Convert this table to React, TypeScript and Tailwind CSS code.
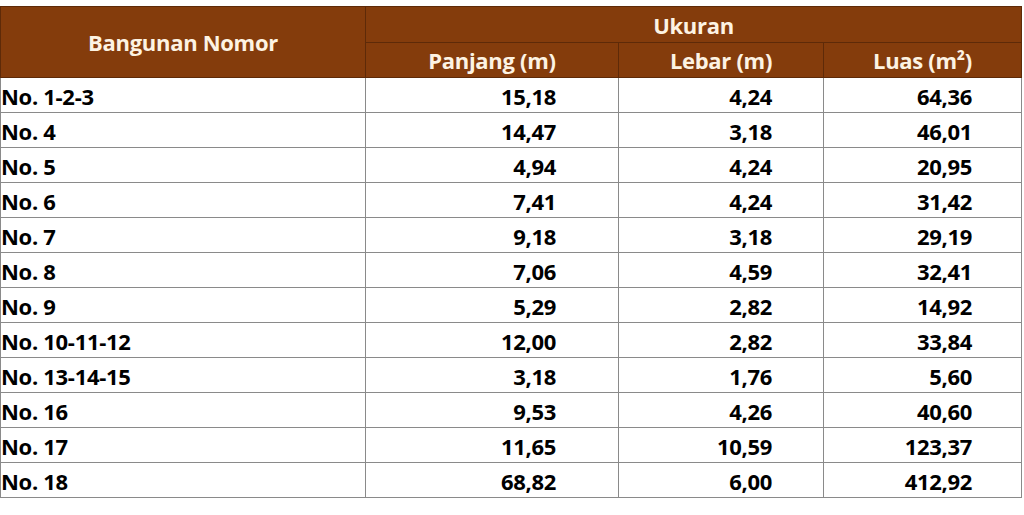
import React from 'react';

const rows = [
  ['No. 1-2-3', '15,18', '4,24', '64,36'],
  ['No. 4', '14,47', '3,18', '46,01'],
  ['No. 5', '4,94', '4,24', '20,95'],
  ['No. 6', '7,41', '4,24', '31,42'],
  ['No. 7', '9,18', '3,18', '29,19'],
  ['No. 8', '7,06', '4,59', '32,41'],
  ['No. 9', '5,29', '2,82', '14,92'],
  ['No. 10-11-12', '12,00', '2,82', '33,84'],
  ['No. 13-14-15', '3,18', '1,76', '5,60'],
  ['No. 16', '9,53', '4,26', '40,60'],
  ['No. 17', '11,65', '10,59', '123,37'],
  ['No. 18', '68,82', '6,00', '412,92'],
];

const App = () => {
  return (
    <div className="w-[1024px] h-[515px] bg-white pt-[6px] font-['Open_Sans',sans-serif]">
      <table className="w-[1021px] border-collapse table-fixed text-[22px] font-bold leading-none tracking-[-0.3px]">
        <colgroup>
          <col className="w-[365px]" />
          <col className="w-[253px]" />
          <col className="w-[205px]" />
          <col className="w-[198px]" />
        </colgroup>
        <thead className="bg-[#843c0c] text-[#fdf3e3]">
          <tr className="h-[36px]">
            <th rowSpan={2} className="border border-[#5e2a08] font-bold text-center">
              Bangunan Nomor
            </th>
            <th colSpan={3} className="border border-[#5e2a08] font-bold text-center">
              Ukuran
            </th>
          </tr>
          <tr className="h-[35px]">
            <th className="border border-[#5e2a08] font-bold text-center">Panjang (m)</th>
            <th className="border border-[#5e2a08] font-bold text-center">Lebar (m)</th>
            <th className="border border-[#5e2a08] font-bold text-center">Luas (m²)</th>
          </tr>
        </thead>
        <tbody className="text-black">
          {rows.map((r) => (
            <tr key={r[0]} className="h-[35px]">
              <td className="border border-[#8a8a8a] pl-0 pt-[2px] text-left">{r[0]}</td>
              <td className="border border-[#8a8a8a] pr-[62px] pt-[2px] text-right">{r[1]}</td>
              <td className="border border-[#8a8a8a] pr-[51px] pt-[2px] text-right">{r[2]}</td>
              <td className="border border-[#8a8a8a] pr-[49px] pt-[2px] text-right">{r[3]}</td>
            </tr>
          ))}
        </tbody>
      </table>
    </div>
  );
};

export default App;
